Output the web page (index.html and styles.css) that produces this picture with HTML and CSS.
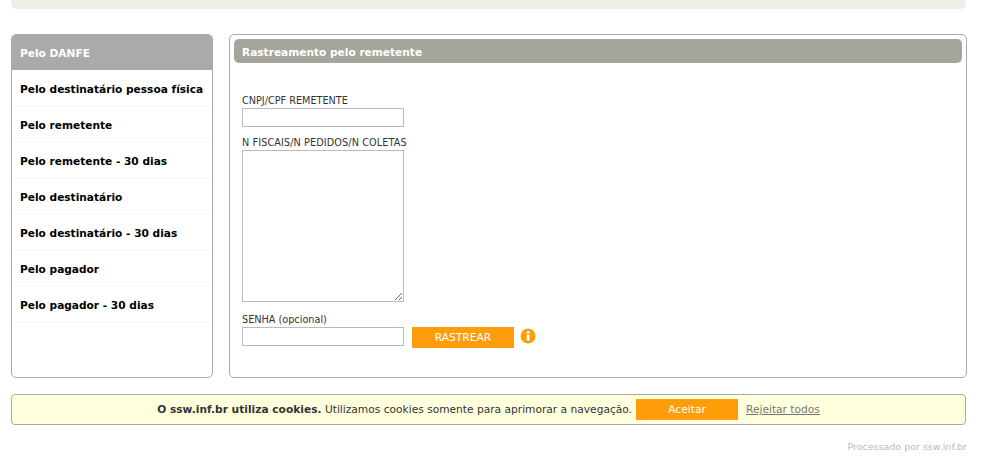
FILE: index.html

```html
<!DOCTYPE html>
<html lang="pt-BR">
<head>
<meta charset="utf-8"/>
<title>Rastreamento pelo remetente</title>
<link rel="stylesheet" href="styles.css">
</head>
<body>
<div class="topbar"></div>

<div class="content">
  <div class="menu">
    <a class="menu-item active" href="#">Pelo DANFE</a>
    <a class="menu-item" href="#">Pelo destinatário pessoa física</a>
    <a class="menu-item" href="#">Pelo remetente</a>
    <a class="menu-item" href="#">Pelo remetente - 30 dias</a>
    <a class="menu-item" href="#">Pelo destinatário</a>
    <a class="menu-item" href="#">Pelo destinatário - 30 dias</a>
    <a class="menu-item" href="#">Pelo pagador</a>
    <a class="menu-item" href="#">Pelo pagador - 30 dias</a>
  </div>

  <div class="panel">
    <div class="panel-title">Rastreamento pelo remetente</div>
    <div class="form">
      <label>CNPJ/CPF REMETENTE</label>
      <input class="field" type="text"/>
      <label class="second">N FISCAIS/N PEDIDOS/N COLETAS</label>
      <textarea class="area"></textarea>
      <label class="third">SENHA (opcional)</label>
      <div class="row">
        <input class="field" type="password"/>
        <button class="btn btn-track">RASTREAR</button>
        <svg class="info" width="16" height="16" viewBox="0 0 16 16">
          <circle cx="8" cy="8" r="7.5" fill="#ff9c0a"/>
          <rect x="6.7" y="3" width="2.8" height="2.6" fill="#fff"/>
          <rect x="6.7" y="6.6" width="2.8" height="6.2" fill="#fff"/>
        </svg>
      </div>
    </div>
  </div>
</div>

<div class="cookies">
  <span class="cookies-text"><b>O ssw.inf.br utiliza cookies.</b> Utilizamos cookies somente para aprimorar a navegação.</span>
  <button class="btn btn-accept">Aceitar</button>
  <a class="reject" href="#">Rejeitar todos</a>
</div>

<div class="footer">Processado por ssw.inf.br</div>
</body>
</html>
```

FILE: styles.css

```css
body { margin: 0; padding: 0 24px 0 11px; background: white; font-family: "DejaVu Sans", Verdana, sans-serif; font-size: 10px; color: #333; }
.topbar { height: 9px; background: #eeeee8; border-radius: 0 0 5px 5px; }
.content { display: flex; gap: 16px; margin-top: 25px; height: 344px; }

.menu { width: 200px; border: 1px solid #aaa; border-radius: 5px; overflow: hidden; height: 342px; }
.menu-item { display: block; height: 33px; padding-top: 2px; line-height: 32px; padding-left: 8px; border-bottom: 1px solid #f5f5f5; font-size: 10.6px; font-weight: bold; color: #000; text-decoration: none; white-space: nowrap; }
.menu-item.active { background: #aaaaaa; color: white; border-bottom-color: white; }

.panel { flex: 1; border: 1px solid #aaa; border-radius: 5px; padding: 4px; margin-right: -1px; }
.panel-title { height: 23px; padding-top: 1px; line-height: 24px; padding-left: 8px; background: #a5a59b; border-radius: 5px; color: white; font-size: 10.6px; font-weight: bold; }
.form { padding: 31px 0 0 8px; }
label { display: block; font-size: 9.7px; line-height: 13px; color: #333; white-space: nowrap; }
label.second { margin-top: 9px; letter-spacing: .1px; }
label.third { margin-top: 11px; }
.field { display: block; box-sizing: border-box; width: 162px; height: 19px; margin: 1px 0 0; padding: 0; border: 1px solid #bbb; background: white; }
.area { display: block; box-sizing: border-box; width: 162px; height: 152px; margin: 1px 0 0; padding: 0; border: 1px solid #bbb; background: white; }
.row { display: flex; align-items: flex-start; }
.btn { border: none; background: #ff9c0a; color: white; font-family: inherit; font-size: 10.7px; }
.btn-track { width: 102px; height: 21px; margin: 1px 0 0 8px; }
.info { margin: 2px 0 0 6px; }

.cookies { display: flex; align-items: center; justify-content: center; height: 29px; margin-top: 16px; border: 1px solid #aaa; border-radius: 4px; background: #ffffdd; font-size: 10.65px; }
.btn-accept { width: 102px; height: 21px; margin-left: 4px; }
.reject { margin-left: 8px; color: #777; }
.footer { margin-top: 16px; margin-right: -1px; text-align: right; font-size: 9.5px; color: #bbb; }
```
